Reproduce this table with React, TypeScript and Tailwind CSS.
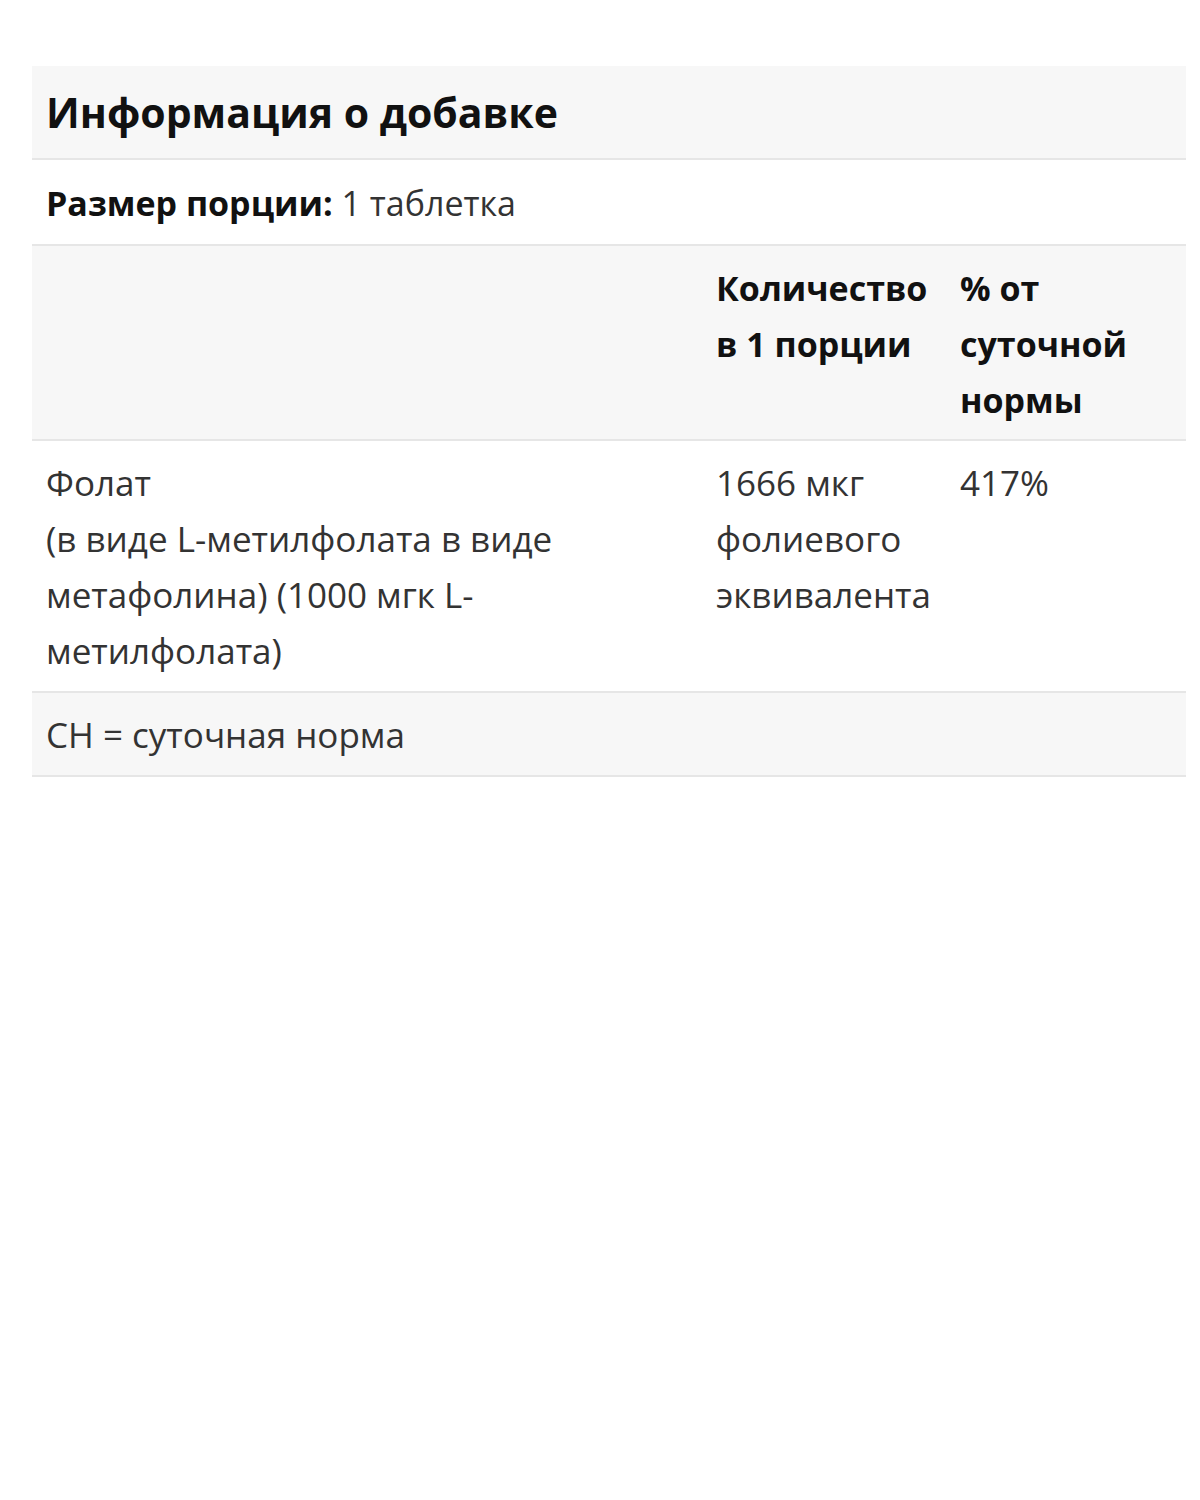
import React from 'react'

const font = { fontFamily: '"Open Sans", "Liberation Sans", Arial, sans-serif' }

export default function App() {
  return (
    <div className="w-[1200px] h-[1500px] bg-white pt-[66px] pl-[32px] pr-[14px]" style={font}>
      <table className="w-[1154px] table-fixed border-collapse text-[#222]">
        <colgroup>
          <col className="w-[670px]" />
          <col className="w-[244px]" />
          <col className="w-[240px]" />
        </colgroup>
        <thead>
          {/* Заголовок */}
          <tr className="bg-[#f7f7f7] border-b-2 border-[#e6e6e6]">
            <th colSpan={3} className="h-[93px] px-[14px] pt-[2px] text-left align-middle text-[41px] font-bold text-[#111]">
              Информация о добавке
            </th>
          </tr>
          <tr className="border-b-2 border-[#e6e6e6]">
            <td colSpan={3} className="h-[86px] px-[14px] pt-[1px] align-middle text-[34px] leading-[56px] text-[#333]">
              <span className="font-bold text-[#111]">Размер порции:</span> 1 таблетка
            </td>
          </tr>
          <tr className="bg-[#f7f7f7] border-b-2 border-[#e6e6e6]">
            <th className="px-[14px] pt-[14px] pb-[11px]"></th>
            <th className="px-[14px] pt-[14px] pb-[11px] text-left align-top text-[34px] leading-[56px] font-bold text-[#111]">
              Количество в 1 порции
            </th>
            <th className="px-[14px] pt-[14px] pb-[11px] text-left align-top text-[34px] leading-[56px] font-bold text-[#111]">
              % от суточной нормы
            </th>
          </tr>
        </thead>
        <tbody className="text-[35px] leading-[56px] text-[#333]">
          <tr className="border-b-2 border-[#e6e6e6]">
            <td className="px-[14px] pt-[14px] pb-[12px] align-top">
              Фолат
              <br />
              (в виде L-метилфолата в виде метафолина) (1000 мгк L-метилфолата)
            </td>
            <td className="px-[14px] pt-[14px] pb-[12px] align-top">1666 мкг фолиевого эквивалента</td>
            <td className="px-[14px] pt-[14px] pb-[12px] align-top">417%</td>
          </tr>
          <tr className="bg-[#f7f7f7] border-b-2 border-[#e6e6e6]">
            <td colSpan={3} className="h-[84px] px-[14px] pt-[1px] align-middle">
              СН = суточная норма
            </td>
          </tr>
        </tbody>
      </table>
    </div>
  )
}
